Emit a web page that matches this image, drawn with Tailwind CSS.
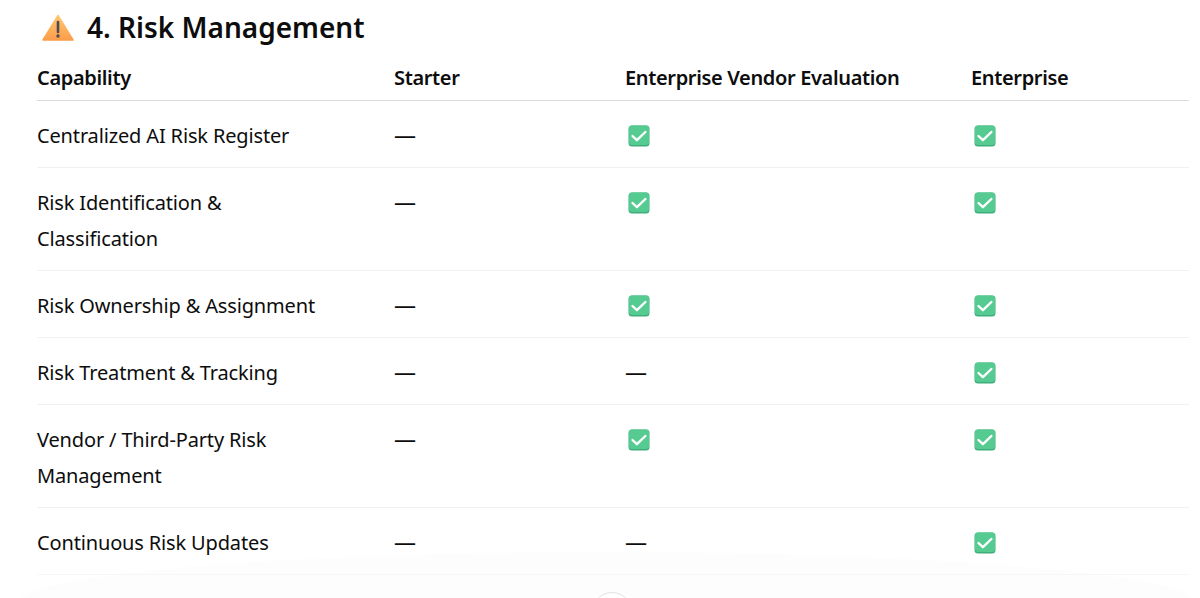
<!DOCTYPE html>
<html lang="en">
<head>
<meta charset="UTF-8">
<title>Risk Management</title>
<script src="https://cdn.jsdelivr.net/npm/@tailwindcss/browser@4"></script>
</head>
<body class="bg-white text-[#0d0d0d] font-['Noto_Sans','Open_Sans',sans-serif]">

<svg width="0" height="0" class="absolute">
  <defs>
    <linearGradient id="warn" x1="0" y1="0" x2="0" y2="1">
      <stop offset="0" stop-color="#ffc870"/>
      <stop offset="1" stop-color="#fb9d4b"/>
    </linearGradient>
    <symbol id="check" viewBox="0 0 22 22">
      <rect x="0.5" y="0.5" width="21" height="21" rx="3.5" fill="#3fae7c"/>
      <rect x="1" y="0.5" width="20" height="19.5" rx="3" fill="#55cb91"/>
      <path d="M4.5 11l4.4 4.2L17.4 7" fill="none" stroke="#fff" stroke-width="2.4" stroke-linecap="round" stroke-linejoin="round"/>
    </symbol>
  </defs>
</svg>

<div class="relative h-[598px] overflow-hidden">
  <!-- faint glow behind the scroll button -->
  <div class="absolute left-[20px] right-[5px] top-[552px] h-[100px] rounded-[50%] bg-[#fdfdfd]"></div>

  <div class="relative pl-[37px] pr-[11px]">
    <h2 class="flex items-center h-[55px] pb-[2px] pl-[5px] text-[28px] font-semibold leading-none">
      <svg class="w-[32px] h-[28px] mr-[13px]" viewBox="0 0 32 28">
        <path d="M16 2.5L31 27H1z" fill="url(#warn)" stroke="url(#warn)" stroke-width="1.5" stroke-linejoin="round"/>
        <path d="M16 9v10" stroke="#4f4a55" stroke-width="2.6" stroke-linecap="round"/>
        <circle cx="16" cy="23" r="1.7" fill="#4f4a55"/>
      </svg>
      4. Risk Management
    </h2>

    <table class="w-[1152px] table-fixed border-collapse text-left text-[20px] leading-[36px] tracking-[-0.15px]">
      <thead>
        <tr class="h-[45px] border-b border-[#dcdcdc] tracking-[-0.35px]">
          <th class="w-[357px] pt-[2px] font-semibold">Capability</th>
          <th class="w-[231px] pt-[2px] font-semibold">Starter</th>
          <th class="w-[346px] pt-[2px] font-semibold">Enterprise Vendor Evaluation</th>
          <th class="pt-[2px] font-semibold">Enterprise</th>
        </tr>
      </thead>
      <tbody>
        <tr class="border-b border-[#f1f1f1]">
          <td class="pt-[17px] pb-[13px] pr-[60px] align-top">Centralized AI Risk Register</td>
          <td class="pt-[15px] pb-[15px] align-top text-[22px]">—</td>
          <td class="pt-[17px] pb-[13px] align-top"><svg class="w-[22px] h-[22px] ml-[3px] mt-[7px]"><use href="#check"/></svg></td>
          <td class="pt-[17px] pb-[13px] align-top"><svg class="w-[22px] h-[22px] ml-[3px] mt-[7px]"><use href="#check"/></svg></td>
        </tr>
        <tr class="border-b border-[#f1f1f1]">
          <td class="pt-[17px] pb-[13px] pr-[60px] align-top">Risk Identification &amp; Classification</td>
          <td class="pt-[15px] pb-[15px] align-top text-[22px]">—</td>
          <td class="pt-[17px] pb-[13px] align-top"><svg class="w-[22px] h-[22px] ml-[3px] mt-[7px]"><use href="#check"/></svg></td>
          <td class="pt-[17px] pb-[13px] align-top"><svg class="w-[22px] h-[22px] ml-[3px] mt-[7px]"><use href="#check"/></svg></td>
        </tr>
        <tr class="border-b border-[#f1f1f1]">
          <td class="pt-[17px] pb-[13px] pr-[20px] align-top">Risk Ownership &amp; Assignment</td>
          <td class="pt-[15px] pb-[15px] align-top text-[22px]">—</td>
          <td class="pt-[17px] pb-[13px] align-top"><svg class="w-[22px] h-[22px] ml-[3px] mt-[7px]"><use href="#check"/></svg></td>
          <td class="pt-[17px] pb-[13px] align-top"><svg class="w-[22px] h-[22px] ml-[3px] mt-[7px]"><use href="#check"/></svg></td>
        </tr>
        <tr class="border-b border-[#f1f1f1]">
          <td class="pt-[17px] pb-[13px] pr-[60px] align-top">Risk Treatment &amp; Tracking</td>
          <td class="pt-[15px] pb-[15px] align-top text-[22px]">—</td>
          <td class="pt-[15px] pb-[15px] align-top text-[22px]">—</td>
          <td class="pt-[17px] pb-[13px] align-top"><svg class="w-[22px] h-[22px] ml-[3px] mt-[7px]"><use href="#check"/></svg></td>
        </tr>
        <tr class="border-b border-[#f1f1f1]">
          <td class="pt-[17px] pb-[13px] pr-[60px] align-top">Vendor / Third-Party Risk Management</td>
          <td class="pt-[15px] pb-[15px] align-top text-[22px]">—</td>
          <td class="pt-[17px] pb-[13px] align-top"><svg class="w-[22px] h-[22px] ml-[3px] mt-[7px]"><use href="#check"/></svg></td>
          <td class="pt-[17px] pb-[13px] align-top"><svg class="w-[22px] h-[22px] ml-[3px] mt-[7px]"><use href="#check"/></svg></td>
        </tr>
        <tr class="border-b border-[#f6f6f6]">
          <td class="pt-[17px] pb-[13px] pr-[60px] align-top">Continuous Risk Updates</td>
          <td class="pt-[15px] pb-[15px] align-top text-[22px]">—</td>
          <td class="pt-[15px] pb-[15px] align-top text-[22px]">—</td>
          <td class="pt-[17px] pb-[13px] align-top"><svg class="w-[22px] h-[22px] ml-[3px] mt-[7px]"><use href="#check"/></svg></td>
        </tr>
      </tbody>
    </table>
  </div>

  <!-- scroll down button, cut by the window -->
  <div class="absolute left-[592px] top-[592px] w-[40px] h-[40px] rounded-full border border-[#e3e3e3] bg-white"></div>
</div>
</body>
</html>
